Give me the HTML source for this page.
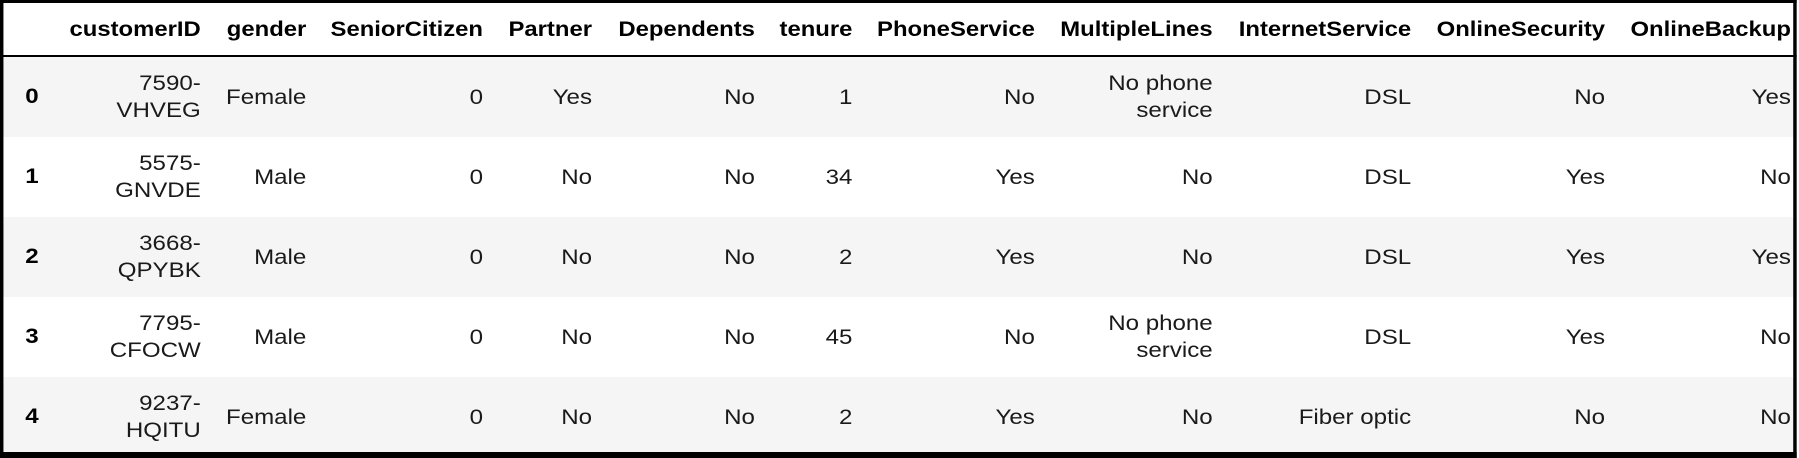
<!DOCTYPE html>
<html><head><meta charset="utf-8"><style>
html,body{margin:0;padding:0;background:#fff;width:1799px;height:458px;overflow:hidden}
#w{position:absolute;left:0;top:0;width:1568px;height:458px;transform:scaleX(1.1473);transform-origin:0 0;font-family:"Liberation Sans",Arial,sans-serif;color:#1a1a1a}
.s{position:absolute;left:0;width:1566px;height:80px;background:#f5f5f5}
.c{position:absolute;height:80px;display:flex;align-items:center;justify-content:flex-end;text-align:right;font-size:21px;line-height:27px;white-space:nowrap}
.h{position:absolute;top:0;height:55px;display:flex;align-items:center;justify-content:flex-end;font-weight:bold;font-size:20.8px;color:#000;white-space:nowrap;padding-top:4px;box-sizing:border-box}
.i{position:absolute;left:22px;height:80px;display:flex;align-items:center;font-weight:bold;font-size:21px;color:#000}
.b{position:absolute;background:#000}
</style></head><body><div id="w">
<div class="s" style="top:57px"></div>
<div class="s" style="top:217px"></div>
<div class="s" style="top:377px"></div>
<div class="b" style="left:0;top:55px;width:1566px;height:2px"></div>
<div class="b" style="left:0;top:0;width:1566px;height:3px"></div>
<div class="b" style="left:0;top:0;width:3px;height:458px"></div>
<div class="b" style="left:1562.5px;top:0;width:3.5px;height:458px"></div>
<div class="b" style="left:0;top:452px;width:1566px;height:6px"></div>

<div class="h" style="right:1393px">customerID</div>
<div class="h" style="right:1301px">gender</div>
<div class="h" style="right:1147px">SeniorCitizen</div>
<div class="h" style="right:1052px">Partner</div>
<div class="h" style="right:910px">Dependents</div>
<div class="h" style="right:825px">tenure</div>
<div class="h" style="right:666px">PhoneService</div>
<div class="h" style="right:511px">MultipleLines</div>
<div class="h" style="right:338px">InternetService</div>
<div class="h" style="right:169px">OnlineSecurity</div>
<div class="h" style="right:7px">OnlineBackup</div>

<div class="i" style="top:57px">0</div>
<div class="c" style="top:57px;right:1393px">7590-<br>VHVEG</div>
<div class="c" style="top:57px;right:1301px">Female</div>
<div class="c" style="top:57px;right:1147px">0</div>
<div class="c" style="top:57px;right:1052px">Yes</div>
<div class="c" style="top:57px;right:910px">No</div>
<div class="c" style="top:57px;right:825px">1</div>
<div class="c" style="top:57px;right:666px">No</div>
<div class="c" style="top:57px;right:511px">No phone<br>service</div>
<div class="c" style="top:57px;right:338px">DSL</div>
<div class="c" style="top:57px;right:169px">No</div>
<div class="c" style="top:57px;right:7px">Yes</div>

<div class="i" style="top:137px">1</div>
<div class="c" style="top:137px;right:1393px">5575-<br>GNVDE</div>
<div class="c" style="top:137px;right:1301px">Male</div>
<div class="c" style="top:137px;right:1147px">0</div>
<div class="c" style="top:137px;right:1052px">No</div>
<div class="c" style="top:137px;right:910px">No</div>
<div class="c" style="top:137px;right:825px">34</div>
<div class="c" style="top:137px;right:666px">Yes</div>
<div class="c" style="top:137px;right:511px">No</div>
<div class="c" style="top:137px;right:338px">DSL</div>
<div class="c" style="top:137px;right:169px">Yes</div>
<div class="c" style="top:137px;right:7px">No</div>

<div class="i" style="top:217px">2</div>
<div class="c" style="top:217px;right:1393px">3668-<br>QPYBK</div>
<div class="c" style="top:217px;right:1301px">Male</div>
<div class="c" style="top:217px;right:1147px">0</div>
<div class="c" style="top:217px;right:1052px">No</div>
<div class="c" style="top:217px;right:910px">No</div>
<div class="c" style="top:217px;right:825px">2</div>
<div class="c" style="top:217px;right:666px">Yes</div>
<div class="c" style="top:217px;right:511px">No</div>
<div class="c" style="top:217px;right:338px">DSL</div>
<div class="c" style="top:217px;right:169px">Yes</div>
<div class="c" style="top:217px;right:7px">Yes</div>

<div class="i" style="top:297px">3</div>
<div class="c" style="top:297px;right:1393px">7795-<br>CFOCW</div>
<div class="c" style="top:297px;right:1301px">Male</div>
<div class="c" style="top:297px;right:1147px">0</div>
<div class="c" style="top:297px;right:1052px">No</div>
<div class="c" style="top:297px;right:910px">No</div>
<div class="c" style="top:297px;right:825px">45</div>
<div class="c" style="top:297px;right:666px">No</div>
<div class="c" style="top:297px;right:511px">No phone<br>service</div>
<div class="c" style="top:297px;right:338px">DSL</div>
<div class="c" style="top:297px;right:169px">Yes</div>
<div class="c" style="top:297px;right:7px">No</div>

<div class="i" style="top:377px">4</div>
<div class="c" style="top:377px;right:1393px">9237-<br>HQITU</div>
<div class="c" style="top:377px;right:1301px">Female</div>
<div class="c" style="top:377px;right:1147px">0</div>
<div class="c" style="top:377px;right:1052px">No</div>
<div class="c" style="top:377px;right:910px">No</div>
<div class="c" style="top:377px;right:825px">2</div>
<div class="c" style="top:377px;right:666px">Yes</div>
<div class="c" style="top:377px;right:511px">No</div>
<div class="c" style="top:377px;right:338px">Fiber optic</div>
<div class="c" style="top:377px;right:169px">No</div>
<div class="c" style="top:377px;right:7px">No</div>
</div></body></html>
